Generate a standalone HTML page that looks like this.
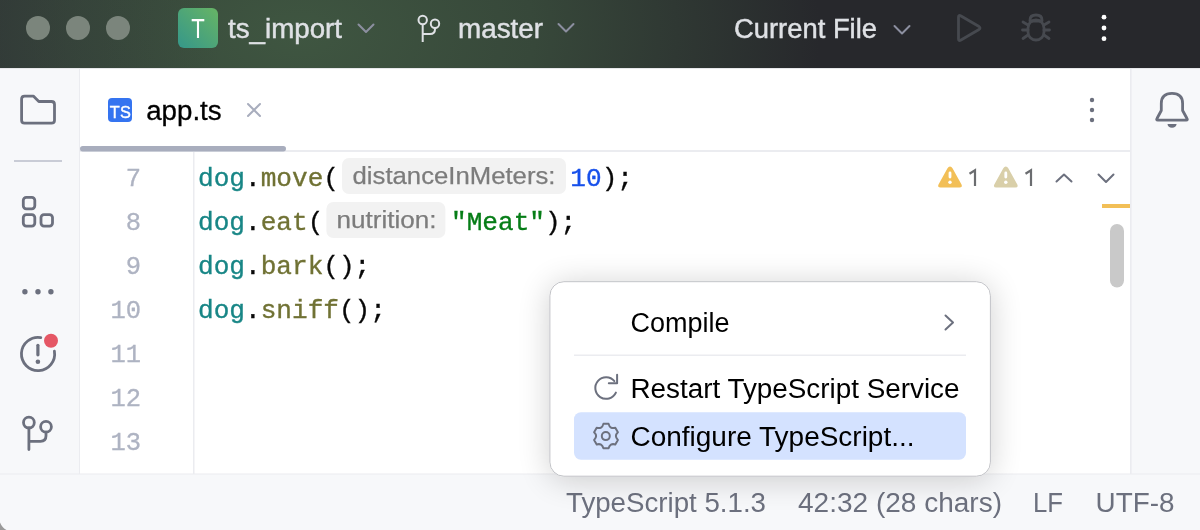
<!DOCTYPE html>
<html><head><meta charset="utf-8"><title>WebStorm</title>
<style>
html,body{margin:0;padding:0;width:1200px;height:530px;overflow:hidden;background:#fff}
svg{display:block;will-change:transform}
.ui{font-family:"Liberation Sans",sans-serif}
.mono{font-family:"Liberation Mono",monospace}
.v{fill:#188686;stroke:#188686}.p{fill:#080808;stroke:#080808}.f{fill:#707234;stroke:#707234}.n{fill:#1750eb;stroke:#1750eb}.s{fill:#067d17;stroke:#067d17}
</style></head><body>
<svg width="1200" height="530" viewBox="0 0 1200 530">
<defs>
  <radialGradient id="tg" cx="300" cy="34" r="520" gradientUnits="userSpaceOnUse" gradientTransform="translate(300 34) scale(1 0.6) translate(-300 -34)">
    <stop offset="0" stop-color="#3f5641"/>
    <stop offset="0.45" stop-color="#37483a"/>
    <stop offset="1" stop-color="#27282c"/>
  </radialGradient>
  <linearGradient id="lg" x1="0" y1="0" x2="1" y2="0">
    <stop offset="0" stop-color="#32363a" stop-opacity="0.45"/>
    <stop offset="1" stop-color="#32363a" stop-opacity="0"/>
  </linearGradient>
  <linearGradient id="pi" x1="0" y1="1" x2="1" y2="0">
    <stop offset="0" stop-color="#35978a"/>
    <stop offset="1" stop-color="#67b465"/>
  </linearGradient>
  <filter id="sh" x="-30%" y="-40%" width="160%" height="180%">
    <feGaussianBlur in="SourceAlpha" stdDeviation="16"/>
    <feOffset dy="3"/>
    <feComponentTransfer><feFuncA type="linear" slope="0.19"/></feComponentTransfer>
    <feMerge><feMergeNode/><feMergeNode in="SourceGraphic"/></feMerge>
  </filter>
</defs>

<!-- ===== Title bar ===== -->
<rect x="0" y="0" width="1200" height="68" fill="#27282c"/>
<rect x="0" y="0" width="1200" height="68" fill="url(#tg)"/>
<rect x="0" y="0" width="220" height="68" fill="url(#lg)"/>
<circle cx="38" cy="28" r="12" fill="#7b857c"/>
<circle cx="78" cy="28" r="12" fill="#7b857c"/>
<circle cx="118" cy="28" r="12" fill="#7b857c"/>

<rect x="178" y="8" width="40" height="40" rx="6" fill="url(#pi)"/>
<text class="ui" x="198" y="38" font-size="27" fill="#ffffff" text-anchor="middle" textLength="13.5" lengthAdjust="spacingAndGlyphs">T</text>
<text class="ui" x="228" y="38" font-size="27" fill="#dfe1e5" stroke="#dfe1e5" stroke-width="0.45" textLength="114" lengthAdjust="spacingAndGlyphs">ts_import</text>
<path d="M358.5 24.5 L366 32 L373.5 24.5" fill="none" stroke="#8c8fa0" stroke-width="2" stroke-linecap="round" stroke-linejoin="round"/>

<g fill="none" stroke="#dfe1e5" stroke-width="2">
  <circle cx="422.7" cy="20" r="4.2"/>
  <circle cx="435" cy="23.8" r="4.2"/>
  <path d="M422.7 24.2 V42 M422.7 34 H430 Q435 34 435 29 V28"/>
</g>
<text class="ui" x="458" y="38" font-size="27" fill="#dfe1e5" stroke="#dfe1e5" stroke-width="0.45" textLength="85" lengthAdjust="spacingAndGlyphs">master</text>
<path d="M558.5 24 L566 31.5 L573.5 24" fill="none" stroke="#8c8fa0" stroke-width="2" stroke-linecap="round" stroke-linejoin="round"/>

<text class="ui" x="734" y="38" font-size="27" fill="#dfe1e5" stroke="#dfe1e5" stroke-width="0.45" textLength="143" lengthAdjust="spacingAndGlyphs">Current File</text>
<path d="M894.5 26 L902 33.5 L909.5 26" fill="none" stroke="#8c8fa0" stroke-width="2" stroke-linecap="round" stroke-linejoin="round"/>

<path d="M958.5 17 Q958.5 14.5 961 16 L979 26.5 Q981 28 979 29.5 L961 40 Q958.5 41.5 958.5 39 Z" fill="none" stroke="#46494f" stroke-width="2.8" stroke-linejoin="round"/>
<g fill="none" stroke="#46494f" stroke-width="2.8" stroke-linecap="round">
  <path d="M1030 20 Q1030 15 1036 15 Q1042 15 1042 20"/>
  <rect x="1028" y="20" width="16" height="20" rx="8"/>
  <path d="M1028 25 L1023 22 M1044 25 L1049 22 M1028 30 H1022.5 M1044 30 H1049.5 M1028 35 L1023 38.5 M1044 35 L1049 38.5 M1030 21 H1042"/>
</g>
<circle cx="1104" cy="17.2" r="2.4" fill="#ffffff"/>
<circle cx="1104" cy="28" r="2.4" fill="#ffffff"/>
<circle cx="1104" cy="38.7" r="2.4" fill="#ffffff"/>

<!-- ===== Left stripe ===== -->
<rect x="0" y="68" width="79" height="407" fill="#f7f8fa"/>
<rect x="79" y="68" width="1" height="407" fill="#ebecf0"/>
<!-- right stripe -->
<rect x="1131" y="68" width="69" height="407" fill="#f7f8fa"/>
<rect x="1130" y="68" width="1.6" height="407" fill="#ebecf0"/>
<rect x="0" y="68" width="1200" height="1" fill="#e6e7ea"/>

<g fill="none" stroke="#6c707e" stroke-width="2.8" stroke-linejoin="round" stroke-linecap="round">
  <path d="M24.6 96.1 H33.3 L38.8 101.5 H51.5 Q54.5 101.5 54.5 104.5 V120.2 Q54.5 123.2 51.5 123.2 H24.6 Q21.6 123.2 21.6 120.2 V99.1 Q21.6 96.1 24.6 96.1 Z"/>
  <rect x="23.3" y="197.3" width="11.5" height="11.5" rx="3"/>
  <rect x="23.3" y="214.6" width="11.5" height="11.5" rx="3"/>
  <rect x="41" y="214.6" width="11.5" height="11.5" rx="3"/>
  <path d="M40.8 337.6 A16.6 16.6 0 1 0 54.4 351.2"/>
  <path d="M37.9 345.3 V354.8" stroke-width="3.2"/>
  <circle cx="28.9" cy="422.6" r="5.4"/>
  <circle cx="46" cy="426.8" r="5.4"/>
  <path d="M28.9 428 V449.5 M28.9 441.3 H40.5 Q46 441.3 46 435.8 V432.2"/>
  <path d="M1161.3 120.2 H1157.8 Q1156 120.2 1157 118.5 L1161.3 110.5 V103.5 Q1161.3 93.3 1172 93.3 Q1182.6 93.3 1182.6 103.5 V110.5 L1187 118.5 Q1188 120.2 1186.2 120.2 Z"/>
</g>
<rect x="14" y="160" width="48" height="2" fill="#c9ccd6"/>
<circle cx="24.9" cy="291.8" r="2.7" fill="#6c707e"/>
<circle cx="38" cy="291.8" r="2.7" fill="#6c707e"/>
<circle cx="50.9" cy="291.8" r="2.7" fill="#6c707e"/>
<circle cx="37.9" cy="361.8" r="2.3" fill="#6c707e"/>
<circle cx="51" cy="340.8" r="7" fill="#e55765"/>
<path d="M1167.5 124 H1176.6 Q1176 127.8 1172 127.8 Q1168 127.8 1167.5 124 Z" fill="#6c707e"/>

<!-- ===== Tab bar ===== -->
<rect x="108" y="98" width="24" height="24" rx="4" fill="#3574f0"/>
<g class="ui" font-size="16.3" fill="#ffffff" stroke="#ffffff" stroke-width="0.4" text-anchor="middle"><text x="114.8" y="118.1">T</text><text x="125.4" y="118.1">S</text></g>
<text class="ui" x="146.2" y="120.1" font-size="27" fill="#000000" stroke="#000000" stroke-width="0.3" textLength="75.5" lengthAdjust="spacingAndGlyphs">app.ts</text>
<path d="M248 104 L260 116 M260 104 L248 116" stroke="#a8adbd" stroke-width="2" stroke-linecap="round"/>
<circle cx="1092" cy="100" r="2.2" fill="#6c707e"/>
<circle cx="1092" cy="110" r="2.2" fill="#6c707e"/>
<circle cx="1092" cy="120" r="2.2" fill="#6c707e"/>
<rect x="80" y="150" width="1050" height="2" fill="#ebecf0"/>
<rect x="80" y="146" width="206" height="5.5" rx="2.75" fill="#a8adbd"/>

<!-- ===== Editor ===== -->
<rect x="193" y="152" width="1.5" height="322" fill="#ebecf0"/>
<g class="mono" font-size="25.5" fill="#aeb3c2" stroke="#aeb3c2" stroke-width="0.3" text-anchor="end">
  <text x="141" y="185.8">7</text>
  <text x="141" y="229.8">8</text>
  <text x="141" y="273.8">9</text>
  <text x="141" y="317.8">10</text>
  <text x="141" y="361.8">11</text>
  <text x="141" y="405.8">12</text>
  <text x="141" y="449.8">13</text>
</g>
<g class="mono" font-size="26.1" stroke-width="0.35">
  <text x="198" y="185.8"><tspan class="v">dog</tspan><tspan class="p">.</tspan><tspan class="f">move</tspan><tspan class="p">(</tspan></text>
  <text x="570.3" y="185.8"><tspan class="n">10</tspan><tspan class="p">);</tspan></text>
  <text x="198" y="229.8"><tspan class="v">dog</tspan><tspan class="p">.</tspan><tspan class="f">eat</tspan><tspan class="p">(</tspan></text>
  <text x="451" y="229.8"><tspan class="s">"Meat"</tspan><tspan class="p">);</tspan></text>
  <text x="198" y="273.8"><tspan class="v">dog</tspan><tspan class="p">.</tspan><tspan class="f">bark</tspan><tspan class="p">();</tspan></text>
  <text x="198" y="317.8"><tspan class="v">dog</tspan><tspan class="p">.</tspan><tspan class="f">sniff</tspan><tspan class="p">();</tspan></text>
</g>
<rect x="342" y="158" width="224" height="36" rx="7" fill="#f2f2f2"/>
<text class="ui" x="352.5" y="184" font-size="24.8" fill="#7c7c7c" stroke="#7c7c7c" stroke-width="0.25" textLength="203" lengthAdjust="spacingAndGlyphs">distanceInMeters:</text>
<rect x="326.4" y="202" width="119" height="36" rx="7" fill="#f2f2f2"/>
<text class="ui" x="336.5" y="228" font-size="24.8" fill="#7c7c7c" stroke="#7c7c7c" stroke-width="0.25" textLength="100" lengthAdjust="spacingAndGlyphs">nutrition:</text>

<!-- warnings -->
<path d="M950 166.5 Q951.5 166.5 952.5 168.3 L961.5 184.5 Q962.8 187.5 959.5 187.5 H940.5 Q937.2 187.5 938.5 184.5 L947.5 168.3 Q948.5 166.5 950 166.5 Z" fill="#f2bf57"/>
<rect x="948.6" y="171.5" width="2.8" height="7" rx="1.4" fill="#fff"/>
<circle cx="950" cy="182.3" r="1.7" fill="#fff"/>
<path d="M969.5 173.8 L975 170.3 V186" fill="none" stroke="#6b6d70" stroke-width="2.2" stroke-linejoin="miter"/>
<path d="M1005.8 166.5 Q1007.3 166.5 1008.3 168.3 L1017.3 184.5 Q1018.6 187.5 1015.3 187.5 H996.3 Q993 187.5 994.3 184.5 L1003.3 168.3 Q1004.3 166.5 1005.8 166.5 Z" fill="#d9cfa9"/>
<rect x="1004.4" y="171.5" width="2.8" height="7" rx="1.4" fill="#fff"/>
<circle cx="1005.8" cy="182.3" r="1.7" fill="#fff"/>
<path d="M1025.5 173.8 L1031 170.3 V186" fill="none" stroke="#6b6d70" stroke-width="2.2" stroke-linejoin="miter"/>
<path d="M1056.5 181.5 L1064 174.5 L1071.5 181.5" fill="none" stroke="#6c707e" stroke-width="2" stroke-linecap="round" stroke-linejoin="round"/>
<path d="M1098.5 174.5 L1106 182 L1113.5 174.5" fill="none" stroke="#6c707e" stroke-width="2" stroke-linecap="round" stroke-linejoin="round"/>
<rect x="1102" y="204" width="28" height="4" fill="#f2bf57"/>
<rect x="1110" y="224" width="14" height="63.5" rx="7" fill="#c9c9c9"/>

<!-- ===== Status bar ===== -->
<rect x="0" y="474" width="1200" height="56" fill="#f7f8fa"/>
<rect x="0" y="473.5" width="1200" height="1" fill="#ebecf0"/>
<g class="ui" font-size="27" fill="#6c707e">
  <text x="566" y="511.8" textLength="200" lengthAdjust="spacingAndGlyphs">TypeScript 5.1.3</text>
  <text x="798" y="511.8" textLength="204" lengthAdjust="spacingAndGlyphs">42:32 (28 chars)</text>
  <text x="1033" y="511.8" textLength="30" lengthAdjust="spacingAndGlyphs">LF</text>
  <text x="1095.5" y="511.8" textLength="79" lengthAdjust="spacingAndGlyphs">UTF-8</text>
</g>

<!-- ===== Popup ===== -->
<g filter="url(#sh)">
  <rect x="549.9" y="281.7" width="440.5" height="194.5" rx="14" fill="#ffffff" stroke="#c2c3c7" stroke-width="1"/>
</g>
<text class="ui" x="630.5" y="331.9" font-size="27" fill="#000000" textLength="99" lengthAdjust="spacingAndGlyphs">Compile</text>
<path d="M945.5 315.5 L953 322.5 L945.5 329.5" fill="none" stroke="#6c707e" stroke-width="2" stroke-linecap="round" stroke-linejoin="round"/>
<rect x="574" y="354.5" width="392" height="1.5" fill="#ebecf0"/>
<g fill="none" stroke="#6c707e" stroke-width="2" stroke-linecap="round" stroke-linejoin="round">
  <path d="M615.9 392.6 A10.8 10.8 0 1 1 614.4 381.1"/>
  <path d="M617.1 374.8 V383.3 H608.8"/>
</g>
<text class="ui" x="630.5" y="398" font-size="27" fill="#000000" textLength="329" lengthAdjust="spacingAndGlyphs">Restart TypeScript Service</text>
<rect x="574" y="412.3" width="392" height="47.5" rx="7" fill="#d4e2ff"/>
<g fill="none" stroke="#6c707e" stroke-width="2" stroke-linejoin="round">
  <path d="M608.60 423.87 L603.40 423.87 Q602.05 429.26 596.71 427.74 L594.11 432.24 Q598.10 436.10 594.11 439.96 L596.71 444.46 Q602.05 442.94 603.40 448.33 L608.60 448.33 Q609.95 442.94 615.29 444.46 L617.89 439.96 Q613.90 436.10 617.89 432.24 L615.29 427.74 Q609.95 429.26 608.60 423.87 Z"/>
  <circle cx="605.8" cy="436.1" r="4"/>
</g>
<text class="ui" x="630.5" y="445.9" font-size="27" fill="#000000" textLength="284" lengthAdjust="spacingAndGlyphs">Configure TypeScript...</text>
<path d="M0 522.5 Q2.2 527.8 6.5 530 L0 530 Z" fill="#9a9a9a"/>
</svg>
</body></html>
